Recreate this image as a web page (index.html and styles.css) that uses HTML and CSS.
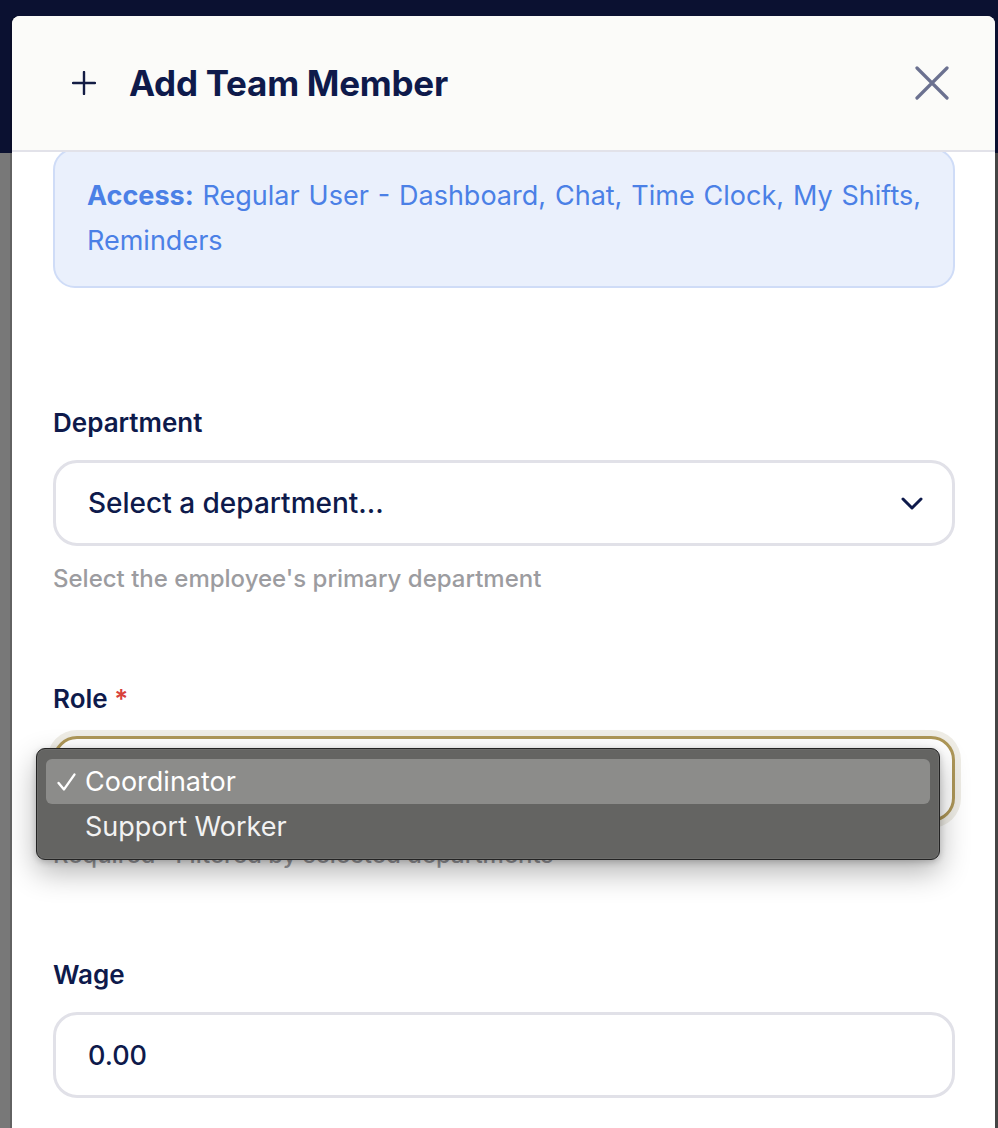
FILE: index.html
```html
<!DOCTYPE html>
<html lang="en">
<head>
<meta charset="utf-8">
<title>Add Team Member</title>
<link rel="stylesheet" href="styles.css">
</head>
<body>
<div class="modal">
  <header class="modal-header">
    <svg class="plus-icon" width="24" height="24" viewBox="0 0 24 24" fill="none" stroke="currentColor" stroke-width="2.4" stroke-linecap="round"><path d="M12 1v22M1 12h22"/></svg>
    <h1 class="modal-title">Add Team Member</h1>
    <svg class="close-icon" width="34" height="34" viewBox="0 0 34 34" fill="none" stroke="currentColor" stroke-width="3.2" stroke-linecap="round"><path d="M2 2l30 30M32 2L2 32"/></svg>
  </header>
  <div class="modal-body">
    <div class="modal-content">
      <div class="access-box"><strong>Access:</strong> Regular User - Dashboard, Chat, Time Clock, My Shifts, Reminders</div>

      <div class="field field-first">
        <div class="field-label">Department</div>
        <div class="select">
          <span>Select a department...</span>
          <svg class="chevron" width="22" height="13" viewBox="0 0 22 13" fill="none" stroke="currentColor" stroke-width="3" stroke-linecap="round" stroke-linejoin="round"><path d="M2 2l9 9 9-9"/></svg>
        </div>
        <div class="field-help">Select the employee's primary department</div>
      </div>

      <div class="field">
        <div class="field-label">Role <span class="req">*</span></div>
        <div class="select select-focused">
          <span>Coordinator</span>
          <svg class="chevron" width="22" height="13" viewBox="0 0 22 13" fill="none" stroke="currentColor" stroke-width="3" stroke-linecap="round" stroke-linejoin="round"><path d="M2 2l9 9 9-9"/></svg>
          <div class="popup">
            <div class="popup-row popup-row-active"><span class="popup-check"><svg width="19" height="18" viewBox="0 0 19 18" fill="none" stroke="currentColor" stroke-width="2.4" stroke-linecap="round" stroke-linejoin="round"><path d="M1.6 10l5.4 6.4L17.4 1.6"/></svg></span>Coordinator</div>
            <div class="popup-row"><span class="popup-check"></span>Support Worker</div>
          </div>
        </div>
        <div class="field-help">Required · Filtered by selected departments</div>
      </div>

      <div class="field">
        <div class="field-label">Wage</div>
        <div class="input">0.00</div>
      </div>
    </div>
  </div>
</div>
</body>
</html>
```

FILE: styles.css
```css
* { box-sizing: border-box; }

html, body { height: 100%; }

body {
  margin: 0;
  padding: 16px 3px 0 12px;
  font-family: Inter, "Noto Sans", "Liberation Sans", sans-serif;
  background:
    linear-gradient(#0b1131 0 153px, #454545 153px) right top / 3px 100% no-repeat,
    linear-gradient(#0b1131 0 153px, #787878 153px);
  overflow: hidden;
}

.modal {
  height: 100%;
  background: #ffffff;
  border-radius: 8px 8px 0 0;
  display: flex;
  flex-direction: column;
  overflow: hidden;
  box-shadow: -2px 0 0 rgba(0, 0, 0, 0.18);
}

.modal-header {
  flex: none;
  height: 136px;
  background: #fbfbf9;
  border-bottom: 2px solid #e2e2e9;
  display: flex;
  align-items: center;
  padding: 0 46px 0 60px;
  color: #0f1a4a;
}

.plus-icon { flex: none; color: #131c44; margin-right: 33px; }

.modal-title {
  flex: 1;
  margin: 0;
  font-size: 35px;
  font-weight: 750;
  letter-spacing: -0.25px;
  color: #0e1a4b;
}

.close-icon { flex: none; color: #6b7190; }

.modal-body {
  flex: 1;
  overflow: hidden;
  padding: 0 40px 0 41px;
}

.modal-content { margin-top: -4px; }

.access-box {
  background: #eaf0fc;
  border: 2px solid #cfdcf7;
  border-radius: 22px;
  padding: 23px 32px;
  font-size: 27px;
  line-height: 45px;
  word-spacing: 1.3px;
  color: #4b80e6;
}

.access-box strong { font-weight: 700; }

.field { margin-top: 84px; }
.field-first { margin-top: 117px; }

.field-label {
  font-size: 26px;
  font-weight: 600;
  line-height: 36px;
  color: #0e1a4b;
  margin-bottom: 19px;
}

.req { color: #d8413b; }

.select, .input {
  position: relative;
  height: 86px;
  border: 3px solid #e1e1e8;
  border-radius: 24px;
  background: #fff;
  display: flex;
  align-items: center;
  justify-content: space-between;
  padding: 0 29px 0 32px;
  font-size: 28px;
  font-weight: 500;
  color: #0e1a4b;
}

.input { font-size: 27px; }

.chevron { color: #0e1a4b; flex: none; }

.select-focused {
  border-color: #ae9758;
  box-shadow: 0 0 0 6px #efede6;
}

.field-help {
  margin-top: 15px;
  font-size: 24px;
  font-weight: 500;
  line-height: 36px;
  color: #9c9ca0;
}

.popup {
  position: absolute;
  left: -20px;
  top: 9px;
  width: 904px;
  padding: 10px 9px;
  background: #646462;
  border: 1px solid #232323;
  border-radius: 9px;
  box-shadow: 0 0 0 1px rgba(255,255,255,0.06) inset, 0 12px 30px rgba(0, 0, 0, 0.3), 0 2px 6px rgba(0,0,0,0.2);
  z-index: 5;
}

.popup-row {
  height: 45px;
  display: flex;
  align-items: center;
  padding-left: 11px;
  border-radius: 6px;
  font-size: 27px;
  font-weight: 400;
  color: #f2f2f2;
}

.popup-row-active { background: #8c8c8a; color: #ffffff; }

.popup-check {
  width: 28px;
  flex: none;
  display: flex;
  align-items: center;
}
```
